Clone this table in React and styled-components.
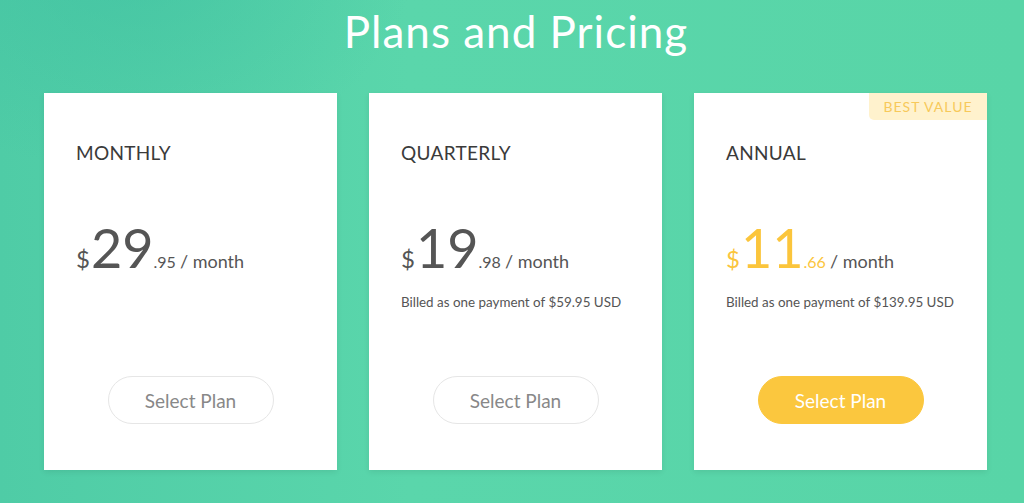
import React from 'react';
import styled, { createGlobalStyle } from 'styled-components';

const GlobalStyle = createGlobalStyle`
  html, body {
    margin: 0;
    padding: 0;
  }
  body {
    font-family: Lato, "Open Sans", sans-serif;
    background: #55d3a8;
  }
`;

const plans = [
  { name: 'MONTHLY', whole: '29', cents: '.95', billed: null, featured: false },
  { name: 'QUARTERLY', whole: '19', cents: '.98', billed: 'Billed as one payment of $59.95 USD', featured: false },
  { name: 'ANNUAL', whole: '11', cents: '.66', billed: 'Billed as one payment of $139.95 USD', featured: true },
];

const App = () => {
  return (
    <Page>
      <GlobalStyle />
      <Title>Plans and Pricing</Title>
      <Cards>
        {plans.map((plan) => (
          <Card key={plan.name}>
            {plan.featured && <Badge>BEST VALUE</Badge>}
            <PlanName>{plan.name}</PlanName>
            <Price featured={plan.featured}>
              <Dollar>$</Dollar>
              <Whole>{plan.whole}</Whole>
              <Cents>{plan.cents}</Cents>
              <Per>/ month</Per>
            </Price>
            <Billed>{plan.billed}</Billed>
            <SelectButton featured={plan.featured}>Select Plan</SelectButton>
          </Card>
        ))}
      </Cards>
    </Page>
  );
};

export default App;

const Page = styled.div`
width:1024px;
height:503px;
overflow:hidden;
box-sizing:border-box;
padding:3px 0 0 44px;
background:
  radial-gradient(ellipse 420px 300px at 120px -40px, rgba(60,190,160,.55), transparent 70%),
  linear-gradient(90deg, #4fcca6 0%, #5ad6ab 40%, #58d5a7 100%);
`;

const Title = styled.h1`
margin:0;
width:944px;
text-align:center;
color:#fff;
font-family:Lato, sans-serif;
font-weight:400;
font-size:44px;
line-height:56px;
letter-spacing:1px;
`;

const Cards = styled.div`
display:flex;
gap:32px;
margin-top:34px;
`;

const Card = styled.div`
position:relative;
width:293px;
height:377px;
box-sizing:border-box;
background:#fff;
padding:48px 24px 0 32px;
display:flex;
flex-direction:column;
box-shadow:0 2px 6px rgba(0,0,0,.08);
`;

const Badge = styled.div`
position:absolute;
top:0;
right:0;
width:118px;
height:27px;
display:flex;
align-items:center;
justify-content:center;
background:#fff2cd;
color:#f7c95a;
font-size:14px;
letter-spacing:1px;
border-bottom-left-radius:5px;
`;

const PlanName = styled.div`
font-size:19px;
color:#3a3a3a;
letter-spacing:0.3px;
line-height:24px;
`;

const Price = styled.div`
display:flex;
align-items:baseline;
margin-top:53px;
height:60px;
color:${props => props.featured ? '#fbc53c' : '#555'};
`;

const Dollar = styled.span`
font-size:24px;
margin-right:1px;
`;

const Whole = styled.span`
font-size:54px;
line-height:60px;
`;

const Cents = styled.span`
font-size:16px;
`;

const Per = styled.span`
font-size:18px;
color:#555;
margin-left:4px;
`;

const Billed = styled.div`
margin-top:16px;
height:17px;
font-size:13.4px;
white-space:nowrap;
color:#555;
`;

const SelectButton = styled.button`
align-self:center;
margin:65px 8px 0 0;
width:166px;
height:48px;
border-radius:24px;
font-family:Lato, sans-serif;
font-size:19px;
cursor:pointer;
border:1px solid ${props => props.featured ? '#fbc73e' : '#e6e6e6'};
background:${props => props.featured ? '#fbc73e' : '#fff'};
color:${props => props.featured ? '#fff' : '#888'};
`;
